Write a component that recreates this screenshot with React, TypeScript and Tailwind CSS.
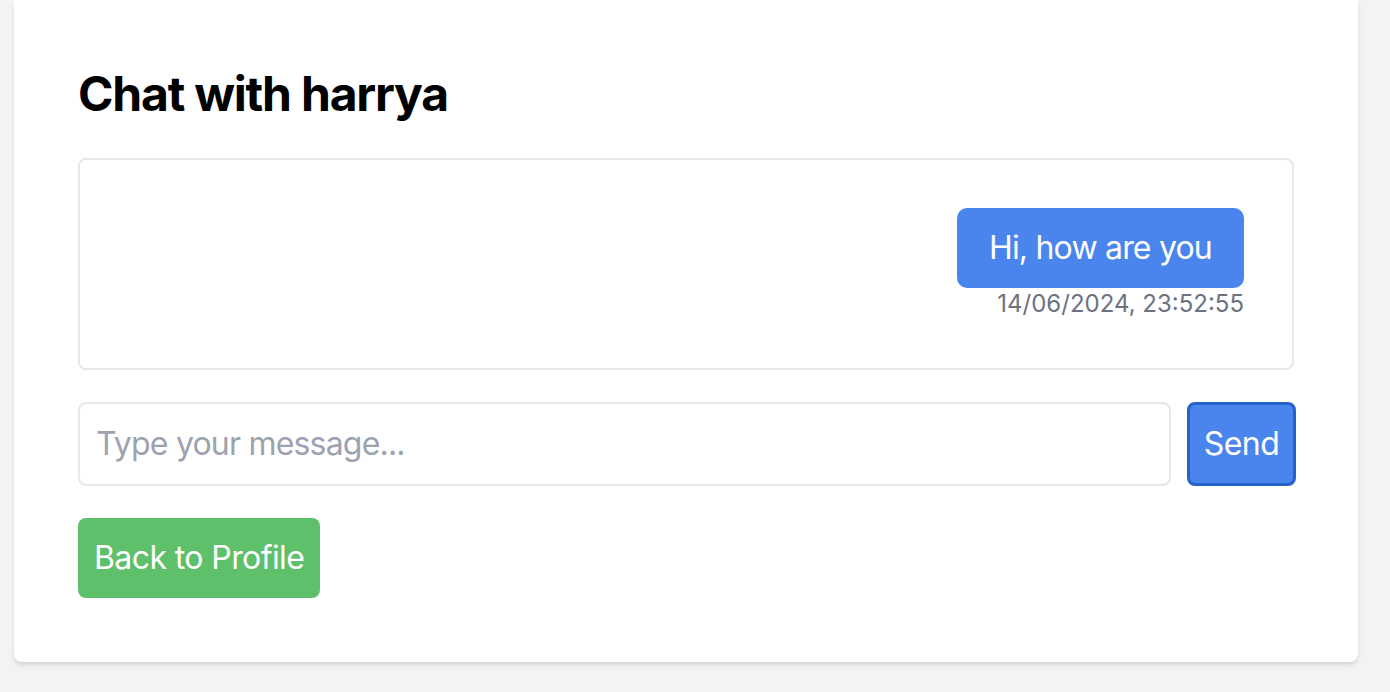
const messages = [{ text: 'Hi, how are you', time: '14/06/2024, 23:52:55' }];

const App = () => {
  return (
    <div
      className="min-h-screen bg-[#f2f3f5] pl-[14px] pb-[31px]"
      style={{ fontFamily: 'Inter, "Noto Sans", sans-serif' }}
    >
      <div className="w-[1344px] rounded-b-lg bg-white px-16 pt-[62px] pb-16 shadow-md">
        <h1 className="mb-8 text-[48px] leading-[64px] font-bold tracking-[-1.2px] text-black">
          Chat with harrya
        </h1>
        <div className="flex flex-col rounded-lg border-2 border-[#e5e7eb] p-12">
          {messages.map((m, i) => (
            <div key={i} className="flex flex-col items-end">
              <div className="rounded-[10px] bg-[#4a85ee] px-8 py-4 text-[32px] leading-[48px] tracking-[-0.8px] text-white">
                {m.text}
              </div>
              <div className="text-[24px] leading-[32px] text-[#6b7280]">{m.time}</div>
            </div>
          ))}
        </div>
        <div className="mt-8 -mr-[2px] flex">
          <input
            className="min-w-0 flex-1 rounded-lg border-2 border-[#e5e7eb] px-4 py-4 text-[32px] leading-[48px] tracking-[-0.8px] text-gray-700 placeholder:text-[#9ca3af] focus:outline-none"
            placeholder="Type your message..."
          />
          <button className="ml-4 w-[109px] rounded-lg border-[3px] border-[#2563c9] bg-[#4a85ee] text-[32px] leading-[48px] tracking-[-0.6px] text-white">
            Send
          </button>
        </div>
        <button className="mt-8 rounded-lg bg-[#5ec06a] px-4 py-4 text-[32px] leading-[48px] tracking-[-0.6px] text-white">
          Back to Profile
        </button>
      </div>
    </div>
  );
};

export default App;
